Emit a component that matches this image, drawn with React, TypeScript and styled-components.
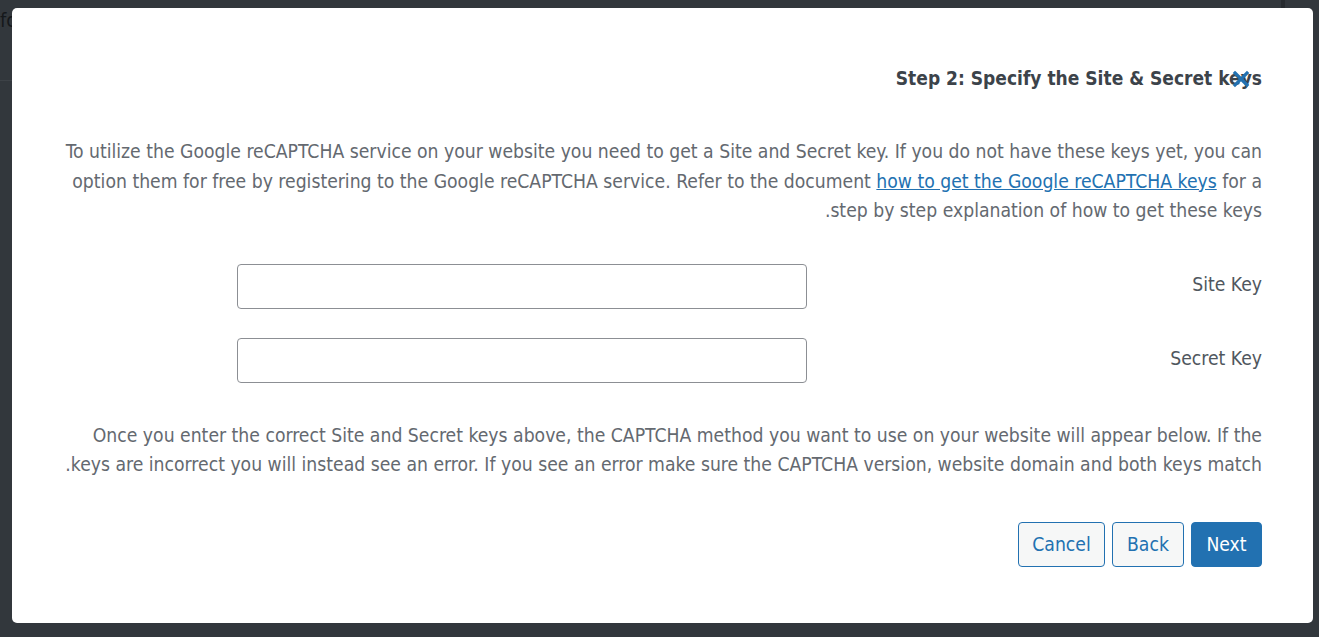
import React from "react";
import styled, { createGlobalStyle } from "styled-components";

const GlobalStyle = createGlobalStyle`
  html, body { margin: 0; padding: 0; }
  body {
    background: #32373c;
    font-family: "DejaVu Sans Condensed", "DejaVu Sans", sans-serif;
    font-stretch: condensed;
    overflow: hidden;
  }
  * { box-sizing: border-box; }
`;

const Page = styled.div`
  position: relative;
  width: 1319px;
  height: 637px;
  background: #32373c;
  overflow: hidden;
`;

const BehindText = styled.div`
  position: absolute;
  left: 0;
  top: 8px;
  font-size: 20px;
  color: #15181b;
`;

const BehindLine = styled.div`
  position: absolute;
  left: 0;
  top: 80px;
  width: 12px;
  height: 1px;
  background: #3d4247;
`;

const BehindStrip = styled.div`
  position: absolute;
  left: 1281px;
  top: 0;
  width: 4px;
  height: 8px;
  background: #272b2f;
`;

const Modal = styled.div`
  position: absolute;
  left: 12px;
  top: 8px;
  width: 1301px;
  height: 615px;
  background: #fff;
  border-radius: 5px;
  direction: rtl;
  padding: 0 51px 0 51px;
  display: flex;
  flex-direction: column;
`;

const Header = styled.div`
  position: relative;
  margin-top: 58px;
  height: 24px;
  display: flex;
  align-items: center;
`;

const Title = styled.h2`
  margin: 0;
  font-size: 19px;
  font-weight: bold;
  color: #3c434a;
  line-height: 24px;
`;

const CloseButton = styled.button`
  position: absolute;
  right: 12px;
  top: 4px;
  width: 18px;
  height: 18px;
  padding: 0;
  border: 0;
  background: transparent;
  display: flex;
  align-items: center;
  justify-content: center;
`;

const Paragraph = styled.p<{ $top: number }>`
  margin: ${(p) => p.$top}px 0 0 0;
  font-size: 19.2px;
  line-height: 29.5px;
  color: #646970;
  text-align: right;
`;

const Line = styled.span`
  display: block;
  white-space: nowrap;
`;

const Link = styled.a`
  color: #2271b1;
  text-decoration: underline;
`;

const Fields = styled.div`
  margin-top: 38px;
  display: flex;
  flex-direction: column;
  gap: 29px;
`;

const FieldRow = styled.div`
  display: grid;
  grid-template-columns: 455px 570px;
  align-items: center;
`;

const Label = styled.label`
  font-size: 19.2px;
  color: #50575e;
  text-align: right;
  line-height: 24px;
  padding-bottom: 2px;
`;

const Input = styled.input`
  width: 570px;
  height: 45px;
  border: 1px solid #8c8f94;
  border-radius: 4px;
  background: #fff;
  font-size: 16px;
  padding: 0 10px;
  direction: ltr;
  outline: none;
`;

const Footer = styled.div`
  margin-top: 42px;
  display: flex;
  gap: 7px;
`;

const Button = styled.button<{ $primary?: boolean; $w: number }>`
  width: ${(p) => p.$w}px;
  height: 45px;
  border-radius: 4px;
  border: 1px solid #2271b1;
  background: ${(p) => (p.$primary ? "#2271b1" : "#f6f7f7")};
  color: ${(p) => (p.$primary ? "#fff" : "#2271b1")};
  font-family: inherit;
  font-stretch: condensed;
  font-size: 19.2px;
  padding: 0;
  cursor: pointer;
`;

export default function App() {
  return (
    <Page>
      <GlobalStyle />
      <BehindText>fo</BehindText>
      <BehindLine />
      <BehindStrip />
      <Modal>
        <Header>
          <Title>Step 2: Specify the Site &amp; Secret keys</Title>
          <CloseButton aria-label="Close">
            <svg width="18" height="18" viewBox="0 0 18 18">
              <path
                d="M3 3 L15 15 M15 3 L3 15"
                stroke="#2271b1"
                strokeWidth="3.2"
                strokeLinecap="square"
                fill="none"
              />
            </svg>
          </CloseButton>
        </Header>
        <Paragraph $top={47}>
          <Line>
            To utilize the Google reCAPTCHA service on your website you need to get a Site and Secret key. If you do not have these keys yet, you can
          </Line>
          <Line>
            option them for free by registering to the Google reCAPTCHA service. Refer to the document{" "}
            <Link href="#">how to get the Google reCAPTCHA keys</Link> for a
          </Line>
          <Line>step by step explanation of how to get these keys.</Line>
        </Paragraph>
        <Fields>
          <FieldRow>
            <Label>Site Key</Label>
            <Input type="text" />
          </FieldRow>
          <FieldRow>
            <Label>Secret Key</Label>
            <Input type="text" />
          </FieldRow>
        </Fields>
        <Paragraph $top={38}>
          <Line>
            Once you enter the correct Site and Secret keys above, the CAPTCHA method you want to use on your website will appear below. If the
          </Line>
          <Line>
            keys are incorrect you will instead see an error. If you see an error make sure the CAPTCHA version, website domain and both keys match.
          </Line>
        </Paragraph>
        <Footer>
          <Button $primary $w={71}>Next</Button>
          <Button $w={72}>Back</Button>
          <Button $w={87}>Cancel</Button>
        </Footer>
      </Modal>
    </Page>
  );
}
